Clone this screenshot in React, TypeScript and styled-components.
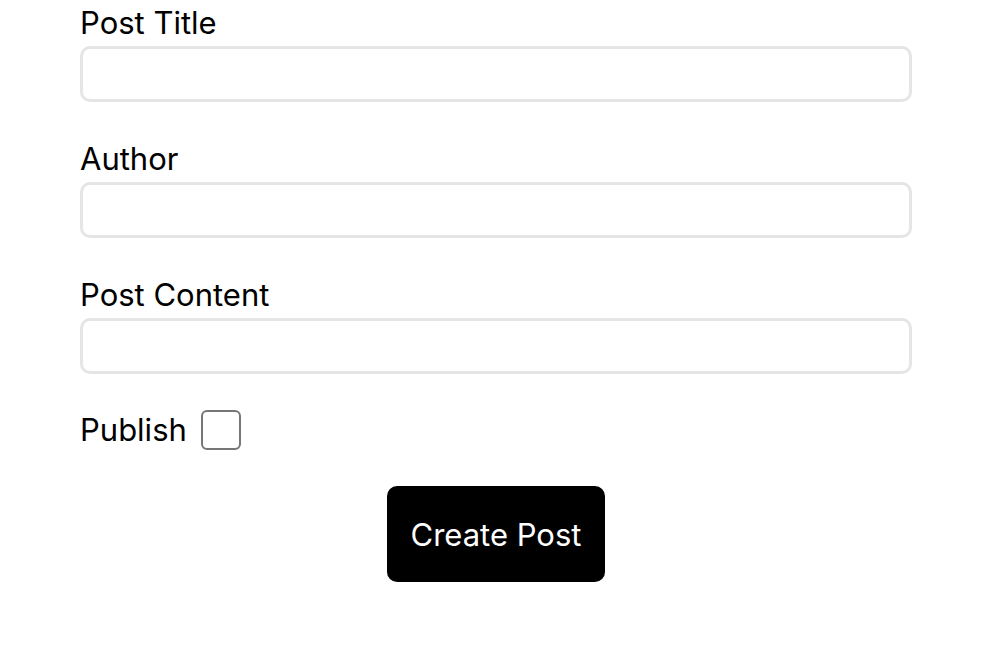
import React from "react";
import styled, { createGlobalStyle } from "styled-components";

const GlobalStyle = createGlobalStyle`
  body {
    margin: 0;
    background: #ffffff;
    font-family: Inter, "Noto Sans", sans-serif;
    color: #000000;
  }
`;

const App = () => {
  return (
    <>
      <GlobalStyle />
      <Form onSubmit={(e) => e.preventDefault()}>
        <Field>
          <Label htmlFor="title">Post Title</Label>
          <Input id="title" type="text" />
        </Field>
        <Field>
          <Label htmlFor="author">Author</Label>
          <Input id="author" type="text" />
        </Field>
        <Field>
          <Label htmlFor="content">Post Content</Label>
          <Input id="content" type="text" />
        </Field>
        <CheckRow>
          <Label htmlFor="publish">Publish</Label>
          <Checkbox id="publish" type="checkbox" />
        </CheckRow>
        <SubmitButton type="submit">Create Post</SubmitButton>
      </Form>
    </>
  );
};

export default App;

const Form = styled.form`
  width: 832px;
  margin: 0 82px 0 80px;
  padding-top: 3px;
  display: flex;
  flex-direction: column;
`;

const Field = styled.div`
  display: flex;
  flex-direction: column;
  gap: 3px;
  margin-bottom: 37px;
`;

const Label = styled.label`
  font-size: 31px;
  line-height: 40px;
  font-weight: 400;
`;

const Input = styled.input`
  box-sizing: border-box;
  width: 100%;
  height: 56px;
  border: 3px solid #e5e5e5;
  border-radius: 10px;
  padding: 0 14px;
  font-size: 22px;
  font-family: inherit;
  outline: none;
`;

const CheckRow = styled.div`
  display: flex;
  align-items: center;
  gap: 14px;
  height: 40px;
  margin-top: -1px;
`;

const Checkbox = styled.input`
  appearance: none;
  margin: 0;
  width: 40px;
  height: 40px;
  box-sizing: border-box;
  border: 2px solid #767676;
  border-radius: 6px;
  background: #ffffff;
`;

const SubmitButton = styled.button`
  align-self: center;
  margin-top: 36px;
  width: 218px;
  height: 96px;
  border: none;
  border-radius: 10px;
  background: #000000;
  color: #ffffff;
  font-family: inherit;
  font-size: 31px;
  cursor: pointer;
`;
